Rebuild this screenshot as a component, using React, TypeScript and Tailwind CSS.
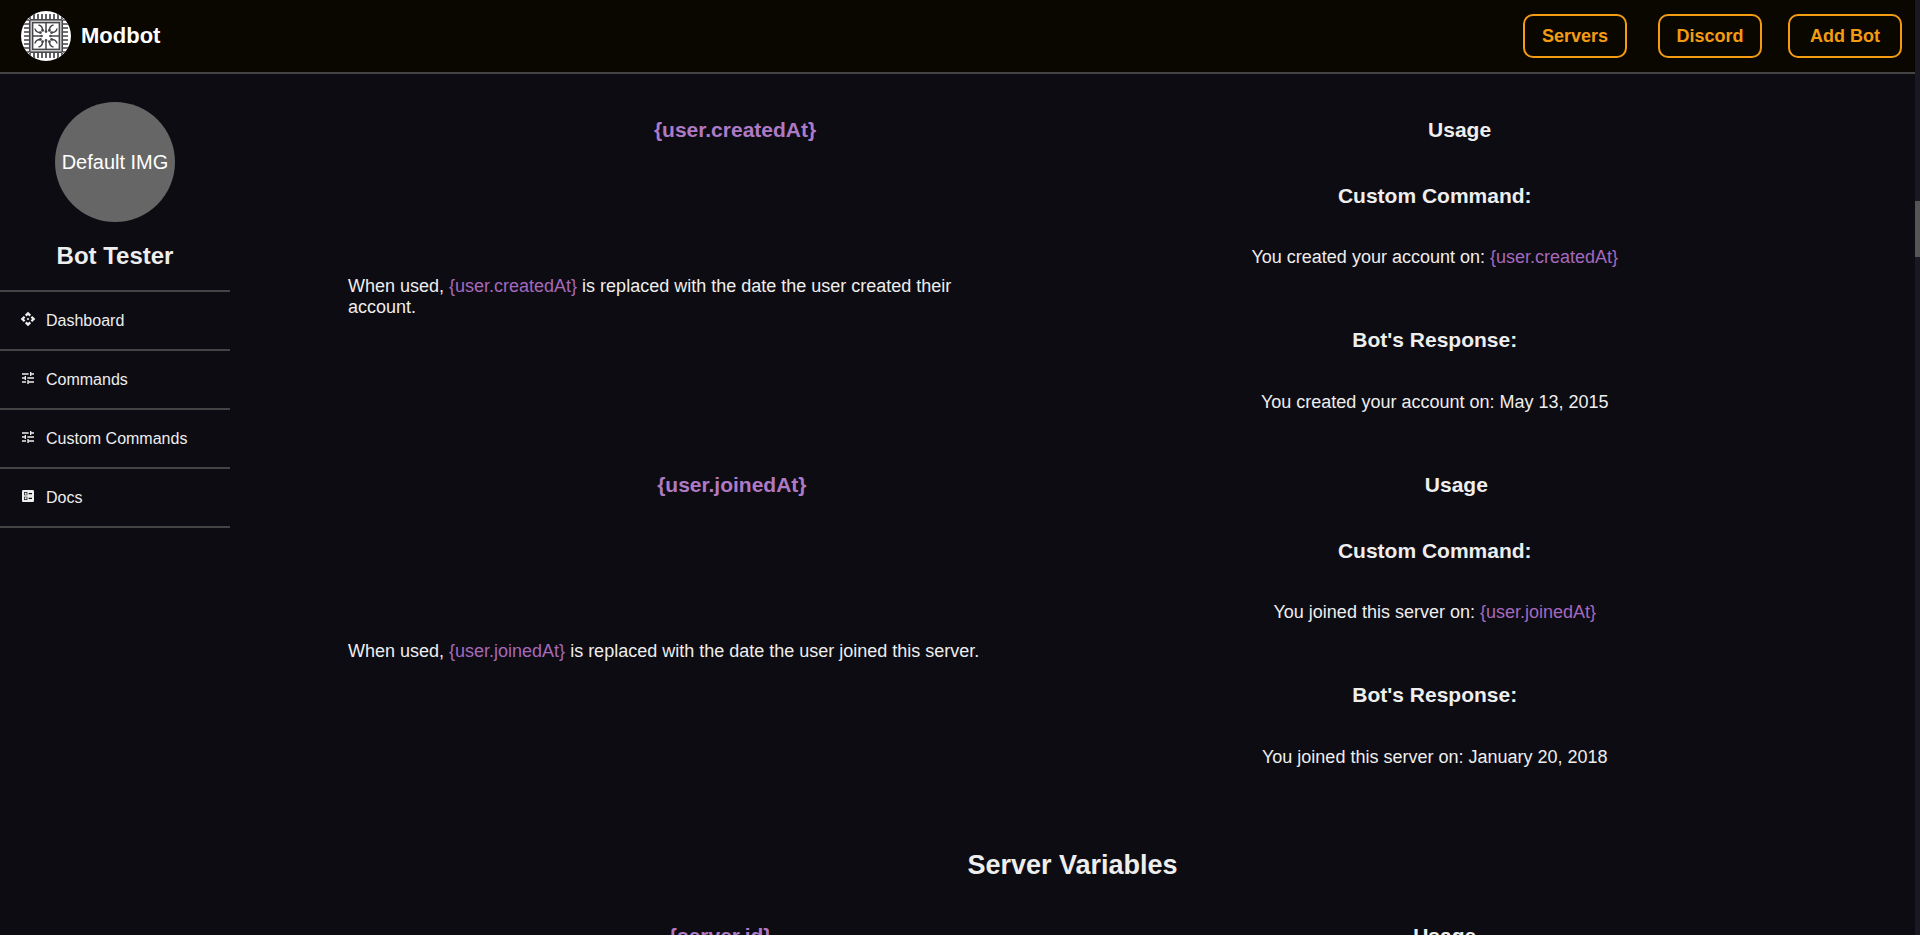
import type { ReactNode } from "react";
import type { IconType } from "react-icons";
import { MdApi, MdBallot, MdTune } from "react-icons/md";

const navItems: { label: string; Icon: IconType }[] = [
  { label: "Dashboard", Icon: MdApi },
  { label: "Commands", Icon: MdTune },
  { label: "Custom Commands", Icon: MdTune },
  { label: "Docs", Icon: MdBallot },
];

const pins = [9, 13, 17, 21, 25, 29, 33, 37, 41];

function Logo() {
  return (
    <svg viewBox="0 0 50 50" className="size-[50px] shrink-0" aria-hidden="true">
      <defs>
        <clipPath id="logo-clip">
          <circle cx="25" cy="25" r="25" />
        </clipPath>
      </defs>
      <g clipPath="url(#logo-clip)" stroke="#46464b" fill="none">
        <rect width="50" height="50" fill="#fff" stroke="none" />
        {pins.map((p) => (
          <path
            key={p}
            strokeWidth="1.7"
            d={`M${p} 3V8M${p} 42V47M3 ${p}H8M42 ${p}H47`}
          />
        ))}
        <rect
          x="8.7"
          y="8.7"
          width="32.6"
          height="32.6"
          rx="1"
          fill="#c4c4c6"
          strokeWidth="1.5"
        />
        <rect x="11.7" y="11.7" width="26.6" height="26.6" fill="#fff" strokeWidth="1.4" />
        {[0, 90, 180, 270].map((angle) => (
          <g key={angle} transform={`rotate(${angle} 25 25)`} strokeWidth="1.5">
            <path d="M25 12V20" />
            <path d="M17.5 14C20.5 14.5 21.6 16.5 21.6 19.5" />
            <path d="M32.5 14C29.5 14.5 28.4 16.5 28.4 19.5" />
            <g fill="#46464b" stroke="none">
              <circle cx="25" cy="20.6" r="1.3" />
              <circle cx="21.6" cy="19.4" r="1.4" />
              <circle cx="28.4" cy="19.4" r="1.4" />
            </g>
          </g>
        ))}
      </g>
    </svg>
  );
}

function Token({ children }: { children: ReactNode }) {
  return <span className="text-[#a569bd]">{children}</span>;
}

function EntryHeader({ name }: { name: string }) {
  return (
    <div className="flex justify-around text-[21px] leading-6 font-bold">
      <h3 className="text-[#af7ac5]">{name}</h3>
      <h3>Usage</h3>
    </div>
  );
}

interface EntryProps {
  name: string;
  meaning: string;
  phrase: string;
  result: string;
}

function Entry({ name, meaning, phrase, result }: EntryProps) {
  return (
    <article className="mb-[23px]">
      <EntryHeader name={name} />
      <div className="flex items-center pt-[42px] pb-[37px] text-[18px] leading-[21px]">
        <div className="w-1/2 pb-1">
          <p className="w-[90%]">
            When used, <Token>{name}</Token> is replaced with {meaning}
          </p>
        </div>
        <div className="w-1/2 text-center">
          <h4 className="text-[21px] leading-6 font-bold">Custom Command:</h4>
          <p className="mt-[39px]">
            {phrase} <Token>{name}</Token>
          </p>
          <h4 className="mt-[60px] text-[21px] leading-6 font-bold">Bot's Response:</h4>
          <p className="mt-[40px]">
            {phrase} {result}
          </p>
        </div>
      </div>
    </article>
  );
}

export default function App() {
  const button =
    "flex h-11 items-center justify-center rounded-[10px] border-2 border-[#f39c12] text-[18px] font-bold text-[#f39c12]";
  return (
    <div className="flex h-screen overflow-hidden bg-[#0d0c12] font-['Liberation_Sans',Arial,sans-serif] text-[#eee]">
      <div className="flex min-w-0 flex-1 flex-col">
        <header className="flex h-[74px] shrink-0 items-center justify-between border-b-2 border-[#444] bg-[#0a0700] pr-[13px] pl-[21px]">
          <a href="#" className="flex items-center gap-[10px] text-[22px] font-bold text-white">
            <Logo />
            <span className="pb-0.5">Modbot</span>
          </a>
          <nav className="flex">
            <a href="#servers" className={`${button} mr-[31px] w-[104px]`}>
              Servers
            </a>
            <a href="#discord" className={`${button} mr-[26px] w-[104px]`}>
              Discord
            </a>
            <a href="#add" className={`${button} w-[114px]`}>
              Add Bot
            </a>
          </nav>
        </header>
        <div className="flex min-h-0 flex-1">
          <aside className="w-[230px] shrink-0 pt-7">
            <div className="mx-auto flex size-[120px] items-center justify-center rounded-full bg-[#666] text-[20px] whitespace-nowrap text-white">
              Default IMG
            </div>
            <h2 className="mt-5 text-center text-[24px] leading-7 font-bold">Bot Tester</h2>
            <nav className="mt-5 border-t-2 border-[#444]">
              {navItems.map(({ label, Icon }) => (
                <a
                  key={label}
                  href="#"
                  className="flex h-[59px] items-center gap-[10px] border-b-2 border-[#444] pl-5 text-[16px]"
                >
                  <Icon className="mb-1 size-4" />
                  {label}
                </a>
              ))}
            </nav>
          </aside>
          <main className="min-w-0 flex-1 overflow-hidden pt-11">
            <div className="mx-auto w-[86%]">
              <Entry
                name="{user.createdAt}"
                meaning="the date the user created their account."
                phrase="You created your account on:"
                result="May 13, 2015"
              />
              <Entry
                name="{user.joinedAt}"
                meaning="the date the user joined this server."
                phrase="You joined this server on:"
                result="January 20, 2018"
              />
              <h2 className="mt-[44px] mb-[43px] text-center text-[27px] leading-8 font-bold">
                Server Variables
              </h2>
              <EntryHeader name="{server.id}" />
            </div>
          </main>
        </div>
      </div>
      <div className="w-[5px] shrink-0 bg-[#1a1822]" aria-hidden="true">
        <div className="h-[21.5%]" />
        <div className="h-[6%] bg-[#555]" />
      </div>
    </div>
  );
}
